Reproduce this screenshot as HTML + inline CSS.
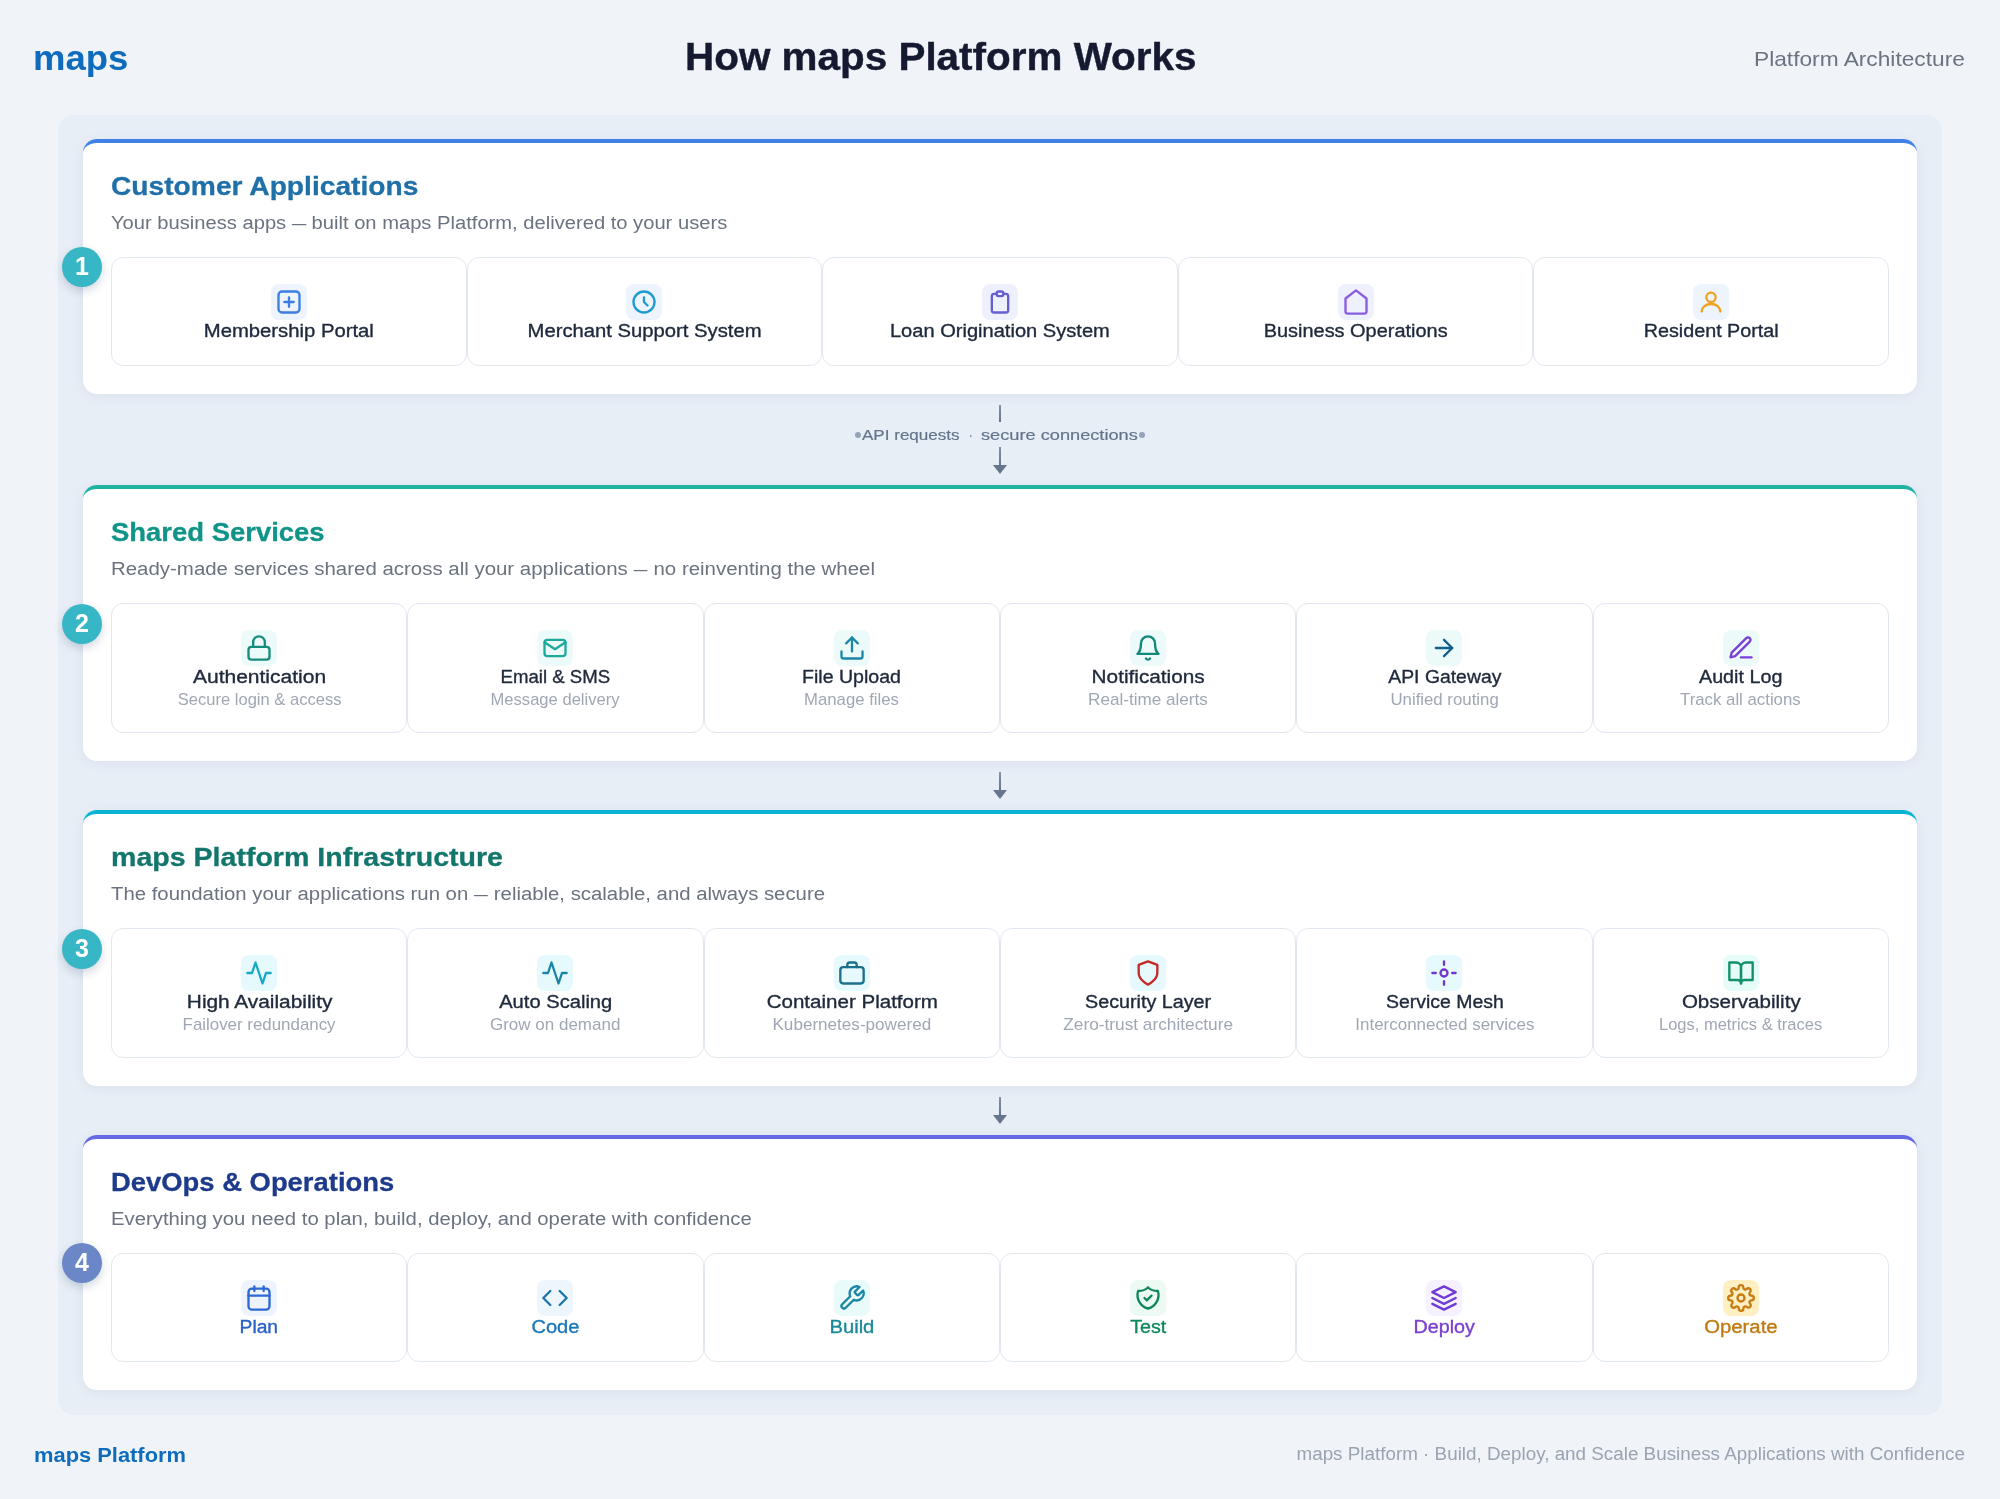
<!DOCTYPE html>
<html lang="en"><head>
<meta charset="utf-8">
<title>How maps Platform Works</title>
<style>
*{box-sizing:border-box;margin:0;padding:0}
html,body{width:2000px;height:1499px;overflow:hidden}
body{will-change:transform;background:#f0f4f9;font-family:"Liberation Sans",sans-serif;position:relative;color:#1e293b}
.abs{position:absolute;white-space:pre;line-height:1}
#logo{left:33.2px;font-weight:700;color:#0f6cbd}
#title{left:685.2px;font-weight:700;color:#151a30;-webkit-text-stroke:0.4px #151a30}
#tag{left:1754px;color:#6b7280}
#wrap{position:absolute;left:58px;top:115px;width:1884px;height:1300px;background:#e8eef6;border-radius:16px}
.panel{position:absolute;left:83px;width:1834px;background:#fff;border-radius:14px;box-shadow:0 2px 12px rgba(30,50,90,.07)}
.panel .bar{position:absolute;left:0;top:0;width:100%;height:18px;border-top:4px solid #000;border-radius:14px 14px 0 0}
.ptitle{left:28px;font-size:26.7px;font-weight:700;-webkit-text-stroke:0.3px currentColor}
.psub{left:28px;font-size:18.8px;color:#6b7280}
.cards{position:absolute;left:28px;width:1778px;display:flex}
.card{flex:1 1 0;border:1px solid #e2e8f0;border-radius:12px;position:relative;background:#fff}
.ibox{position:absolute;left:50%;top:26px;width:36px;height:36px;margin-left:-18px;border-radius:8px}
.ibox svg{position:absolute;left:4px;top:4px;width:28px;height:28px;fill:none;stroke-width:2;stroke-linecap:round;stroke-linejoin:round}
.lbl{position:absolute;left:0;right:0;text-align:center;white-space:nowrap;line-height:1;font-size:18.8px;color:#1e293b;-webkit-text-stroke:0.36px currentColor}
.sub{position:absolute;left:0;right:0;text-align:center;white-space:nowrap;line-height:1;font-size:15.7px;color:#a0a7b4}
.lbl span,.sub span{display:inline-block}
.badge{position:absolute;left:62px;width:40px;height:40px;border-radius:50%;color:#fff;font-weight:700;font-size:25px;line-height:39px;text-align:center;box-shadow:0 4px 10px rgba(30,60,100,.2)}
.vl{position:absolute;left:999px;width:2px;background:linear-gradient(#8391a3,#64748b)}
.ah{position:absolute;left:993px;width:0;height:0;border-left:7px solid transparent;border-right:7px solid transparent;border-top:9.6px solid #66758c}
.flow{color:#64748b;-webkit-text-stroke:0.2px #64748b}
.dot{position:absolute;width:6.2px;height:6.2px;border-radius:50%;background:#94a3b8}
#flogo{left:34.4px;font-weight:700;color:#0f6cbd}
#ftext{right:34.7px;color:#9aa3b2}
.em{display:inline-block;width:13.2px;overflow:hidden;vertical-align:top;line-height:1}
</style>
</head>
<body>
<div class="abs" id="logo" style="top: 39.57px; font-size: 35px; transform: scaleX(1.0433); transform-origin: left center;">maps</div>
<div class="abs" id="title" style="top: 38.23px; font-size: 38.6px; transform: scaleX(1.048); transform-origin: left center;">How maps Platform Works</div>
<div class="abs" id="tag" style="top: 49.33px; font-size: 20.4px; transform: scaleX(1.1143); transform-origin: left center;">Platform Architecture</div>
<div id="wrap"></div>
<div class="panel" style="top:139px;height:255px">
<div class="bar" style="border-color:#4282e8"></div>
<div class="abs ptitle" style="top: 33.5px; color: rgb(31, 111, 168); transform: scaleX(1.0558); transform-origin: left center;">Customer Applications</div>
<div class="abs psub" style="top: 75.09px; transform: scaleX(1.0733); transform-origin: left center;">Your business apps <span class="em">—</span> built on maps Platform, delivered to your users</div>
<div class="cards" style="top:118px;height:109px">
<div class="card"><div class="ibox" style="background:#eef4fd"><svg viewBox="0 0 24 24" stroke="#3b7de0"><rect x="3" y="3" width="18" height="18" rx="3"></rect><path d="M12 8v8M8 12h8"></path></svg></div><div class="lbl" style="top:63.99px"><span style="transform: scaleX(1.0791); transform-origin: center center;">Membership Portal</span></div></div>
<div class="card"><div class="ibox" style="background:#eef4fd"><svg viewBox="0 0 24 24" stroke="#1d9bd1"><circle cx="12" cy="12" r="9"></circle><path d="M12 8v4l3 3"></path></svg></div><div class="lbl" style="top:63.99px"><span style="transform: scaleX(1.0777); transform-origin: center center;">Merchant Support System</span></div></div>
<div class="card"><div class="ibox" style="background:#eef1fd"><svg viewBox="0 0 24 24" stroke="#665fd2"><path d="M9 5H7a2 2 0 0 0-2 2v12a2 2 0 0 0 2 2h10a2 2 0 0 0 2-2V7a2 2 0 0 0-2-2h-2"></path><rect x="9" y="3" width="6" height="4" rx="2"></rect></svg></div><div class="lbl" style="top:63.99px"><span style="transform: scaleX(1.0692); transform-origin: center center;">Loan Origination System</span></div></div>
<div class="card"><div class="ibox" style="background:#eef1fd"><svg viewBox="0 0 24 24" stroke="#8a5ce0"><path d="M3 9l9-7 9 7v11a2 2 0 0 1-2 2H5a2 2 0 0 1-2-2z"></path></svg></div><div class="lbl" style="top:63.99px"><span style="transform: scaleX(1.0612); transform-origin: center center;">Business Operations</span></div></div>
<div class="card"><div class="ibox" style="background:#eef4fd"><svg viewBox="0 0 24 24" stroke="#eea220"><circle cx="12" cy="8" r="4"></circle><path d="M4 20.200a8 6.500 0 0 1 16 0"></path></svg></div><div class="lbl" style="top:63.99px"><span style="transform: scaleX(1.0514); transform-origin: center center;">Resident Portal</span></div></div>
</div></div>
<div class="badge" style="top:247px;background:#37b6c6">1</div>
<div class="panel" style="top:485px;height:276px">
<div class="bar" style="border-color:#1eb2a2"></div>
<div class="abs ptitle" style="top: 33.5px; color: rgb(15, 148, 136); transform: scaleX(1.0284); transform-origin: left center;">Shared Services</div>
<div class="abs psub" style="top: 75.09px; transform: scaleX(1.088); transform-origin: left center;">Ready-made services shared across all your applications <span class="em">—</span> no reinventing the wheel</div>
<div class="cards" style="top:118px;height:130px">
<div class="card"><div class="ibox" style="background:#ecfbf9"><svg viewBox="0 0 24 24" stroke="#168c7c"><rect x="3" y="11" width="18" height="11" rx="2.500"></rect><path d="M7 11V7a5 5 0 0 1 10 0v4"></path></svg></div><div class="lbl" style="top:63.99px"><span style="transform: scaleX(1.1189); transform-origin: center center;">Authentication</span></div><div class="sub" style="top:87.61px"><span style="transform: scaleX(1.0553); transform-origin: center center;">Secure login &amp; access</span></div></div>
<div class="card"><div class="ibox" style="background:#ecfbf9"><svg viewBox="0 0 24 24" stroke="#1daa9c"><rect x="3" y="5" width="18" height="14" rx="2.500"></rect><path d="M3 7l9 6 9-6"></path></svg></div><div class="lbl" style="top:63.99px"><span style="transform: scaleX(0.9898); transform-origin: center center;">Email &amp; SMS</span></div><div class="sub" style="top:87.61px"><span style="transform: scaleX(1.0567); transform-origin: center center;">Message delivery</span></div></div>
<div class="card"><div class="ibox" style="background:#ecfbf9"><svg viewBox="0 0 24 24" stroke="#1b87a6"><path d="M21 15v4a2 2 0 0 1-2 2H5a2 2 0 0 1-2-2v-4"></path><path d="M17 8l-5-5-5 5"></path><path d="M12 3v12"></path></svg></div><div class="lbl" style="top:63.99px"><span style="transform: scaleX(1.0421); transform-origin: center center;">File Upload</span></div><div class="sub" style="top:87.61px"><span style="transform: scaleX(1.0657); transform-origin: center center;">Manage files</span></div></div>
<div class="card"><div class="ibox" style="background:#ecfbf9"><svg viewBox="0 0 24 24" stroke="#128878"><path d="M18 8A6 6 0 0 0 6 8c0 7-3 9-3 9h18s-3-2-3-9"></path><path d="M13.730 21a2 2 0 0 1-3.460 0"></path></svg></div><div class="lbl" style="top:63.99px"><span style="transform: scaleX(1.1054); transform-origin: center center;">Notifications</span></div><div class="sub" style="top:87.61px"><span style="transform: scaleX(1.0897); transform-origin: center center;">Real-time alerts</span></div></div>
<div class="card"><div class="ibox" style="background:#ecfbf9"><svg viewBox="0 0 24 24" stroke="#0e5f8f"><path d="M5 12h14"></path><path d="M12 5l7 7-7 7"></path></svg></div><div class="lbl" style="top:63.99px"><span style="transform: scaleX(1.0318); transform-origin: center center;">API Gateway</span></div><div class="sub" style="top:87.61px"><span style="transform: scaleX(1.0705); transform-origin: center center;">Unified routing</span></div></div>
<div class="card"><div class="ibox" style="background:#ecfbf9"><svg viewBox="0 0 24 24" stroke="#7a3fd6"><path d="M12 20h9"></path><path d="M16.500 3.500a2.121 2.121 0 0 1 3 3L7 19l-4 1 1-4L16.500 3.500z"></path></svg></div><div class="lbl" style="top:63.99px"><span style="transform: scaleX(1.0507); transform-origin: center center;">Audit Log</span></div><div class="sub" style="top:87.61px"><span style="transform: scaleX(1.0695); transform-origin: center center;">Track all actions</span></div></div>
</div></div>
<div class="badge" style="top:604px;background:#37b6c6">2</div>
<div class="panel" style="top:810px;height:276px">
<div class="bar" style="border-color:#08b4d2"></div>
<div class="abs ptitle" style="top: 33.5px; color: rgb(18, 118, 108); transform: scaleX(1.0701); transform-origin: left center;">maps Platform Infrastructure</div>
<div class="abs psub" style="top: 75.09px; transform: scaleX(1.0827); transform-origin: left center;">The foundation your applications run on <span class="em">—</span> reliable, scalable, and always secure</div>
<div class="cards" style="top:118px;height:130px">
<div class="card"><div class="ibox" style="background:#e6fafd"><svg viewBox="0 0 24 24" stroke="#18a9c6"><path d="M22 12h-4l-3 9L9 3l-3 9H2"></path></svg></div><div class="lbl" style="top:63.99px"><span style="transform: scaleX(1.109); transform-origin: center center;">High Availability</span></div><div class="sub" style="top:87.61px"><span style="transform: scaleX(1.0764); transform-origin: center center;">Failover redundancy</span></div></div>
<div class="card"><div class="ibox" style="background:#e6fafd"><svg viewBox="0 0 24 24" stroke="#1a86a6"><path d="M22 12h-4l-3 9L9 3l-3 9H2"></path></svg></div><div class="lbl" style="top:63.99px"><span style="transform: scaleX(1.0725); transform-origin: center center;">Auto Scaling</span></div><div class="sub" style="top:87.61px"><span style="transform: scaleX(1.0844); transform-origin: center center;">Grow on demand</span></div></div>
<div class="card"><div class="ibox" style="background:#e6fafd"><svg viewBox="0 0 24 24" stroke="#1b708c"><rect x="2" y="7" width="20" height="14" rx="2.500"></rect><path d="M16 7V5a2 2 0 0 0-2-2h-4a2 2 0 0 0-2 2v2"></path></svg></div><div class="lbl" style="top:63.99px"><span style="transform: scaleX(1.094); transform-origin: center center;">Container Platform</span></div><div class="sub" style="top:87.61px"><span style="transform: scaleX(1.0897); transform-origin: center center;">Kubernetes-powered</span></div></div>
<div class="card"><div class="ibox" style="background:#e6fafd"><svg viewBox="0 0 24 24" stroke="#c42a2a"><path d="M12 22s8-4 8-10V5l-8-3-8 3v7c0 6 8 10 8 10z"></path></svg></div><div class="lbl" style="top:63.99px"><span style="transform: scaleX(1.0496); transform-origin: center center;">Security Layer</span></div><div class="sub" style="top:87.61px"><span style="transform: scaleX(1.1004); transform-origin: center center;">Zero-trust architecture</span></div></div>
<div class="card"><div class="ibox" style="background:#e6fafd"><svg viewBox="0 0 24 24" stroke="#7436c8"><circle cx="12" cy="12" r="3"></circle><path d="M12 2v3M12 19v3M2 12h3M19 12h3"></path></svg></div><div class="lbl" style="top:63.99px"><span style="transform: scaleX(1.0362); transform-origin: center center;">Service Mesh</span></div><div class="sub" style="top:87.61px"><span style="transform: scaleX(1.081); transform-origin: center center;">Interconnected services</span></div></div>
<div class="card"><div class="ibox" style="background:#e6fcf8"><svg viewBox="0 0 24 24" stroke="#11906a"><path d="M2 3h6a4 4 0 0 1 4 4v14a3 3 0 0 0-3-3H2z"></path><path d="M22 3h-6a4 4 0 0 0-4 4v14a3 3 0 0 1 3-3h7z"></path></svg></div><div class="lbl" style="top:63.99px"><span style="transform: scaleX(1.0943); transform-origin: center center;">Observability</span></div><div class="sub" style="top:87.61px"><span style="transform: scaleX(1.0516); transform-origin: center center;">Logs, metrics &amp; traces</span></div></div>
</div></div>
<div class="badge" style="top:929px;background:#37b6c6">3</div>
<div class="panel" style="top:1135px;height:255px">
<div class="bar" style="border-color:#6569e5"></div>
<div class="abs ptitle" style="top: 33.5px; color: rgb(30, 58, 138); transform: scaleX(1.0267); transform-origin: left center;">DevOps &amp; Operations</div>
<div class="abs psub" style="top: 75.09px; transform: scaleX(1.0811); transform-origin: left center;">Everything you need to plan, build, deploy, and operate with confidence</div>
<div class="cards" style="top:118px;height:109px">
<div class="card"><div class="ibox" style="background:#eef4fd"><svg viewBox="0 0 24 24" stroke="#2d68d4"><rect x="3" y="4" width="18" height="18" rx="3"></rect><path d="M16 2v4M8 2v4M3 10h18"></path></svg></div><div class="lbl" style="top:63.99px;color:#2860c8"><span style="transform: scaleX(1.0241); transform-origin: center center;">Plan</span></div></div>
<div class="card"><div class="ibox" style="background:#eef6fd"><svg viewBox="0 0 24 24" stroke="#1a73ad"><path d="M16 18l6-6-6-6"></path><path d="M8 6l-6 6 6 6"></path></svg></div><div class="lbl" style="top:63.99px;color:#1a78b8"><span style="transform: scaleX(1.0689); transform-origin: center center;">Code</span></div></div>
<div class="card"><div class="ibox" style="background:#e8fafa"><svg viewBox="0 0 24 24" stroke="#1b86a4"><path d="M14.700 6.300a1 1 0 0 0 0 1.400l1.600 1.600a1 1 0 0 0 1.400 0l3.770-3.770a6 6 0 0 1-7.940 7.940l-6.910 6.910a2.120 2.120 0 0 1-3-3l6.910-6.910a6 6 0 0 1 7.940-7.940l-3.760 3.760z"></path></svg></div><div class="lbl" style="top:63.99px;color:#1a8a9a"><span style="transform: scaleX(1.0774); transform-origin: center center;">Build</span></div></div>
<div class="card"><div class="ibox" style="background:#ecfaf3"><svg viewBox="0 0 24 24" stroke="#11875e"><path d="M9 12l2 2 4-4"></path><path d="M12 3a12 12 0 0 0 8.500 3a12 12 0 0 1-8.500 15a12 12 0 0 1-8.500-15a12 12 0 0 0 8.500-3"></path></svg></div><div class="lbl" style="top:63.99px;color:#0f8a5a"><span style="transform: scaleX(1.0449); transform-origin: center center;">Test</span></div></div>
<div class="card"><div class="ibox" style="background:#f6f1fe"><svg viewBox="0 0 24 24" stroke="#6f3ad6"><path d="M12 2L2 7l10 5 10-5-10-5z"></path><path d="M2 17l10 5 10-5"></path><path d="M2 12l10 5 10-5"></path></svg></div><div class="lbl" style="top:63.99px;color:#7a3fd0"><span style="transform: scaleX(1.0476); transform-origin: center center;">Deploy</span></div></div>
<div class="card"><div class="ibox" style="background:#fef0c3"><svg viewBox="0 0 24 24" stroke="#c97a10"><circle cx="12" cy="12" r="3"></circle><path d="M19.400 15a1.650 1.650 0 0 0 .33 1.820l.06.06a2 2 0 1 1-2.830 2.830l-.06-.06a1.650 1.650 0 0 0-1.820-.33 1.650 1.650 0 0 0-1 1.510V21a2 2 0 0 1-4 0v-.09A1.650 1.650 0 0 0 9 19.400a1.650 1.650 0 0 0-1.820.33l-.06.06a2 2 0 1 1-2.830-2.830l.06-.06a1.650 1.650 0 0 0 .33-1.820 1.650 1.650 0 0 0-1.510-1H3a2 2 0 0 1 0-4h.09A1.650 1.650 0 0 0 4.600 9a1.650 1.650 0 0 0-.33-1.820l-.06-.06a2 2 0 1 1 2.830-2.830l.06.06a1.650 1.650 0 0 0 1.820.33H9a1.650 1.650 0 0 0 1-1.510V3a2 2 0 0 1 4 0v.09a1.650 1.650 0 0 0 1 1.510 1.650 1.650 0 0 0 1.820-.33l.06-.06a2 2 0 1 1 2.830 2.830l-.06.06a1.650 1.650 0 0 0-.33 1.820V9a1.650 1.650 0 0 0 1.510 1H21a2 2 0 0 1 0 4h-.09a1.650 1.650 0 0 0-1.510 1z"></path></svg></div><div class="lbl" style="top:63.99px;color:#c07a10"><span style="transform: scaleX(1.0792); transform-origin: center center;">Operate</span></div></div>
</div></div>
<div class="badge" style="top:1243px;background:#6b87c7">4</div>
<div class="vl" style="top:405px;height:17px"></div>
<div class="dot" style="left:854.8px;top:432px"></div><div class="dot" style="left:1138.8px;top:432px"></div>
<div class="abs flow" style="top: 427.16px; font-size: 15.4px; left: 862px; transform: scaleX(1.1075); transform-origin: left center;">API requests</div>
<div class="abs flow" style="top: 427.16px; font-size: 15.4px; left: 968.8px; transform: scaleX(0.6809); transform-origin: left center;">·</div>
<div class="abs flow" style="top: 427.16px; font-size: 15.4px; left: 981.1px; transform: scaleX(1.1824); transform-origin: left center;">secure connections</div>
<div class="vl" style="top:447px;height:19px"></div><div class="ah" style="top:465px"></div>
<div class="vl" style="top:772px;height:18px"></div><div class="ah" style="top:790px"></div>
<div class="vl" style="top:1097px;height:18px"></div><div class="ah" style="top:1115px"></div>
<div class="abs" id="flogo" style="top: 1443.62px; font-size: 21px; transform: scaleX(1.042); transform-origin: left center;">maps Platform</div>
<div class="abs" id="ftext" style="top: 1445.46px; font-size: 18px; transform: scaleX(1.0462); transform-origin: right center;">maps Platform · Build, Deploy, and Scale Business Applications with Confidence</div>

</body></html>
